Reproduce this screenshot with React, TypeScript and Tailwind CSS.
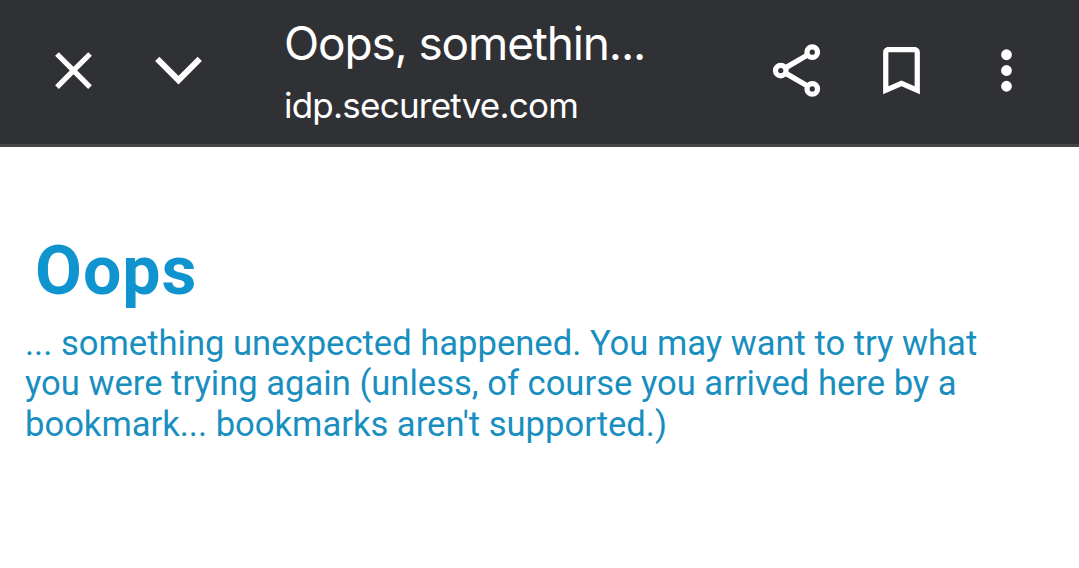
import type { ReactNode } from "react";

function Icon({ children }: { children: ReactNode }) {
  return (
    <svg className="size-[63px] shrink-0" viewBox="0 0 24 24" fill="currentColor">
      {children}
    </svg>
  );
}

function Header() {
  return (
    <header className="flex h-[147px] items-start border-b-[3px] border-[#454549] bg-[#303135] pr-[41px] pl-[42px] text-white">
      <div className="flex gap-[42px] pt-[39px]">
        <Icon>
          <path d="M19 6.41L17.59 5 12 10.59 6.41 5 5 6.41 10.59 12 5 17.59 6.41 19 12 13.41 17.59 19 19 17.59 13.41 12z" />
        </Icon>
        <Icon>
          <path d="M3.9 7.6L12 15.7l8.1-8.1" fill="none" stroke="currentColor" strokeWidth="2.3" />
        </Icon>
      </div>
      <div className="ml-[74px] flex-1 whitespace-nowrap font-['Inter',sans-serif]">
        <p className="mt-[18px] text-[46px] leading-[50px] tracking-[-1.15px]">Oops, somethin...</p>
        <p className="mt-[12px] text-[35px] leading-[50px] tracking-[-0.77px]">idp.securetve.com</p>
      </div>
      <div className="flex gap-[42px] pt-[39px]">
        <Icon>
          <g fill="none" stroke="currentColor" strokeWidth="2">
            <circle cx="18" cy="5" r="2" />
            <circle cx="6" cy="12" r="2" />
            <circle cx="18" cy="19" r="2" />
            <path d="M16.2 6.1L7.8 11M7.8 13l8.4 4.9" />
          </g>
        </Icon>
        <Icon>
          <path d="M17 3H7c-1.1 0-2 .9-2 2v16l7-3 7 3V5c0-1.1-.9-2-2-2zm0 15l-5-2.18L7 18V5h10v13z" />
        </Icon>
        <Icon>
          <circle cx="12" cy="6" r="2.05" />
          <circle cx="12" cy="12" r="2.05" />
          <circle cx="12" cy="18" r="2.05" />
        </Icon>
      </div>
    </header>
  );
}

export default function App() {
  return (
    <div className="h-[568px] bg-white font-['Roboto',sans-serif]">
      <Header />
      <main className="px-[25px] pt-[88px] text-[#0f94cf]">
        <h1 className="pl-[10px] text-[68px] font-bold leading-[72px] tracking-[1px]">Oops</h1>
        <p className="mt-[16px] whitespace-nowrap text-[34.6px] leading-[40.4px] text-[#198fc0]">
          ... something unexpected happened. You may want to try what
          <br />
          you were trying again (unless, of course you arrived here by a
          <br />
          bookmark... bookmarks aren't supported.)
        </p>
      </main>
    </div>
  );
}
